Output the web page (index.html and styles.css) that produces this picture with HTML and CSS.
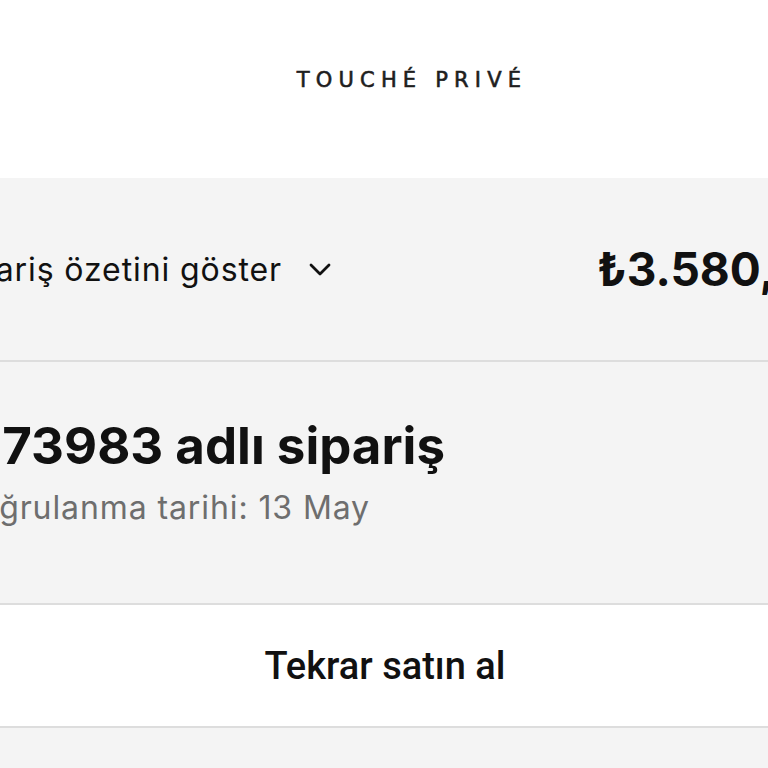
FILE: index.html
```html
<!DOCTYPE html>
<html lang="tr">
<head>
<meta charset="utf-8">
<title>Touché Privé</title>
<link rel="stylesheet" href="styles.css">
</head>
<body>
<div class="page">
  <header class="top">
    <div class="logo">TOUCHÉ PRIVÉ</div>
  </header>
  <section class="summary">
    <div class="summary-left">
      <span class="summary-text">Sipariş özetini göster</span>
      <svg class="chevron" viewBox="0 0 24 16" width="24" height="16"><path d="M3 3 L12 12 L21 3" fill="none" stroke="#111" stroke-width="2.8" stroke-linecap="round" stroke-linejoin="round"/></svg>
    </div>
    <div class="price">₺3.580,00</div>
  </section>
  <section class="order">
    <div class="order-line"><h1 class="order-title">#TP 73983 adlı sipariş</h1></div>
    <div class="order-line sub"><p class="order-date">Doğrulanma tarihi: 13 May</p></div>
  </section>
  <section class="buy">
    <button class="buy-btn">Tekrar satın al</button>
  </section>
  <section class="rest"></section>
</div>
</body>
</html>
```
FILE: styles.css
```css
html, body {
  margin: 0;
  padding: 0;
  background: #ffffff;
}
body {
  width: 768px;
  height: 768px;
  overflow: hidden;
  font-family: Inter, "Noto Sans", sans-serif;
  color: #111;
}
.page {
  display: flex;
  flex-direction: column;
}
.top {
  height: 178px;
  display: flex;
  justify-content: center;
  align-items: center;
  padding-left: 56px;
  box-sizing: border-box;
  padding-bottom: 18px;
}
.logo {
  font-family: "DejaVu Sans", sans-serif;
  font-size: 21px;
  letter-spacing: 6.2px;
  color: #1e1e1e;
  -webkit-text-stroke: 0.6px #1e1e1e;
}
.summary {
  background: #f4f4f4;
  border-bottom: 2px solid #dddddd;
  display: flex;
  align-items: center;
  box-sizing: border-box;
  height: 184px;
}
.summary-left {
  flex: none;
  width: 332px;
  display: flex;
  justify-content: flex-end;
  align-items: center;
  gap: 26px;
}
.summary-text {
  white-space: nowrap;
  font-size: 32px;
  letter-spacing: 0.9px;
  font-weight: 400;
}
.chevron {
  flex: none;
  margin-top: 2px;
}
.price {
  flex: none;
  margin-left: 265px;
  white-space: nowrap;
  font-size: 46px;
  font-weight: 700;
}
.order {
  background: #f4f4f4;
  height: 243px;
  box-sizing: border-box;
  border-bottom: 2px solid #dddddd;
  padding-top: 52px;
  display: flex;
  flex-direction: column;
}
.order-line {
  display: flex;
  justify-content: flex-end;
  width: 445px;
}
.order-line.sub {
  width: 370px;
  margin-top: 8px;
}
.order-title {
  margin: 0;
  white-space: nowrap;
  font-size: 51px;
  font-weight: 700;
  line-height: 64px;
}
.order-date {
  margin: 0;
  white-space: nowrap;
  font-size: 32px;
  letter-spacing: 0.9px;
  color: #6e6e6e;
  line-height: 44px;
}
.buy {
  height: 123px;
  box-sizing: border-box;
  border-bottom: 2px solid #dddddd;
  background: #fff;
  display: flex;
  justify-content: center;
  align-items: center;
}
.buy-btn {
  border: none;
  background: none;
  font-family: Roboto, sans-serif;
  font-weight: 500;
  font-size: 38px;
  color: #111;
  padding: 0;
  margin-left: 2px;
}
.rest {
  height: 60px;
  background: #f4f4f4;
}
```
